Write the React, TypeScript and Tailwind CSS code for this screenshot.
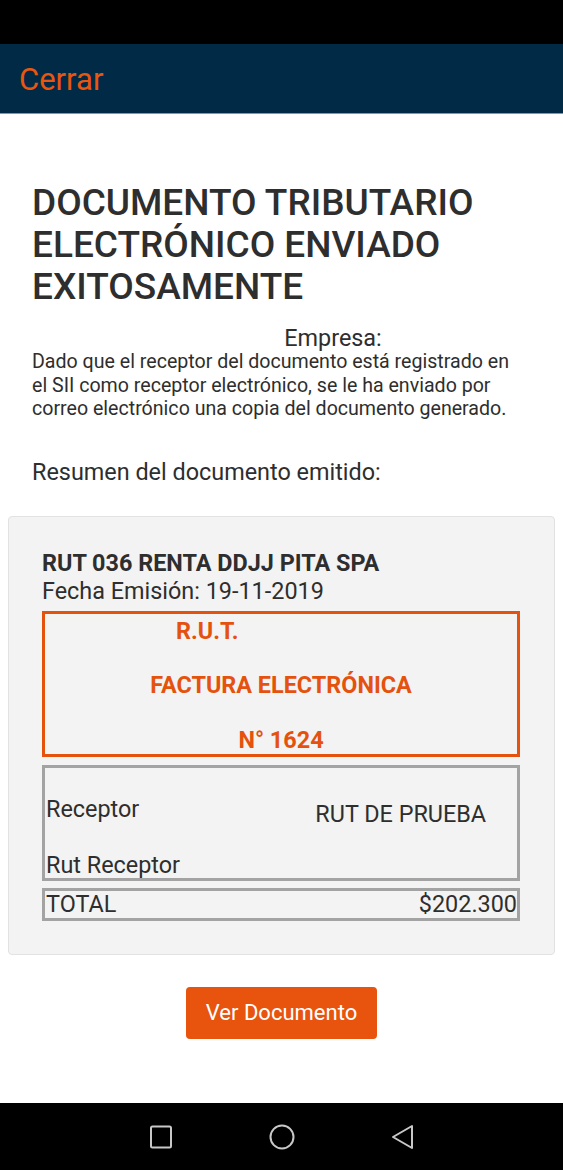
import React from "react";

export default function App() {
  const font = { fontFamily: "Roboto, 'Noto Sans', sans-serif" };
  return (
    <div className="w-[563px] h-[1170px] flex flex-col bg-white text-[#333333]" style={font}>
      <div className="h-[44px] bg-black shrink-0" />
      <div className="h-[70px] bg-[#012a47] shrink-0 flex items-center px-[19px] border-b border-[#7f97a8]">
        <span className="text-[#e8560f] text-[31px] leading-none mt-[2px]">Cerrar</span>
      </div>
      <div className="flex-1 flex flex-col">
        <div className="px-[32px] pt-[68px]">
          <h1 className="text-[37px] leading-[42px] font-medium text-[#2e2e2e]">
            DOCUMENTO TRIBUTARIO ELECTRÓNICO ENVIADO EXITOSAMENTE
          </h1>
          <div className="mt-[18px] text-center text-[23.4px] leading-[24px] text-[#2e2e2e] pl-[103px]">Empresa:</div>
          <p className="w-[492px] text-[19.6px] leading-[23.5px] text-[#2e2e2e]">
            Dado que el receptor del documento está registrado en el SII como receptor electrónico, se le ha enviado por correo electrónico una copia del documento generado.
          </p>
          <div className="mt-[37px] text-[23.4px] leading-[28px] text-[#2e2e2e]">Resumen del documento emitido:</div>
        </div>
        <div className="mx-[8px] mt-[30px] bg-[#f3f3f3] border border-[#e2e2e2] rounded-[4px] pl-[33px] pr-[34px] pt-[32px] pb-[33px]">
          <div className="text-[23.4px] leading-[28px] font-bold text-[#2e2e2e]">RUT 036 RENTA DDJJ PITA SPA</div>
          <div className="text-[23.4px] leading-[28px] text-[#2e2e2e]">Fecha Emisión: 19-11-2019</div>
          <div className="mt-[6px] border-[3px] border-[#e4520d] h-[146px] flex flex-col text-[#e4520d] font-bold text-[23.4px] leading-[28px]">
            <div className="pl-[131px] pt-[3px]">R.U.T.</div>
            <div className="text-center mt-[26px]">FACTURA ELECTRÓNICA</div>
            <div className="text-center mt-[27px]">N° 1624</div>
          </div>
          <div className="mt-[8px] border-[3px] border-[#a3a3a3] h-[116px] flex flex-col text-[23.4px] leading-[28px] text-[#2e2e2e] pl-[1px]">
            <div className="flex mt-[27px]">
              <span>Receptor</span>
              <span className="ml-[176px] mt-[5px]">RUT DE PRUEBA</span>
            </div>
            <div className="mt-[23px]">Rut Receptor</div>
          </div>
          <div className="mt-[7px] border-[3px] border-[#a3a3a3] h-[33px] flex items-center justify-between pl-[1px] text-[23.4px] leading-[28px] text-[#2e2e2e]">
            <span>TOTAL</span>
            <span>$202.300</span>
          </div>
        </div>
        <div className="flex justify-center mt-[32px]">
          <button className="w-[191px] h-[52px] bg-[#e8530e] rounded-[4px] text-white text-[22px]">Ver Documento</button>
        </div>
      </div>
      <div className="h-[67px] bg-black shrink-0 flex items-center justify-center gap-[96px]">
        <svg width="24" height="24" viewBox="0 0 24 24">
          <rect x="2" y="1.5" width="20" height="21" rx="1.5" fill="none" stroke="#c8c8c8" strokeWidth="2" />
        </svg>
        <svg width="26" height="26" viewBox="0 0 26 26">
          <circle cx="13" cy="13" r="11.5" fill="none" stroke="#c8c8c8" strokeWidth="2" />
        </svg>
        <svg width="24" height="26" viewBox="0 0 24 26">
          <path d="M21 2 L21 24 L2 13 Z" fill="none" stroke="#c8c8c8" strokeWidth="2" strokeLinejoin="round" />
        </svg>
      </div>
    </div>
  );
}
